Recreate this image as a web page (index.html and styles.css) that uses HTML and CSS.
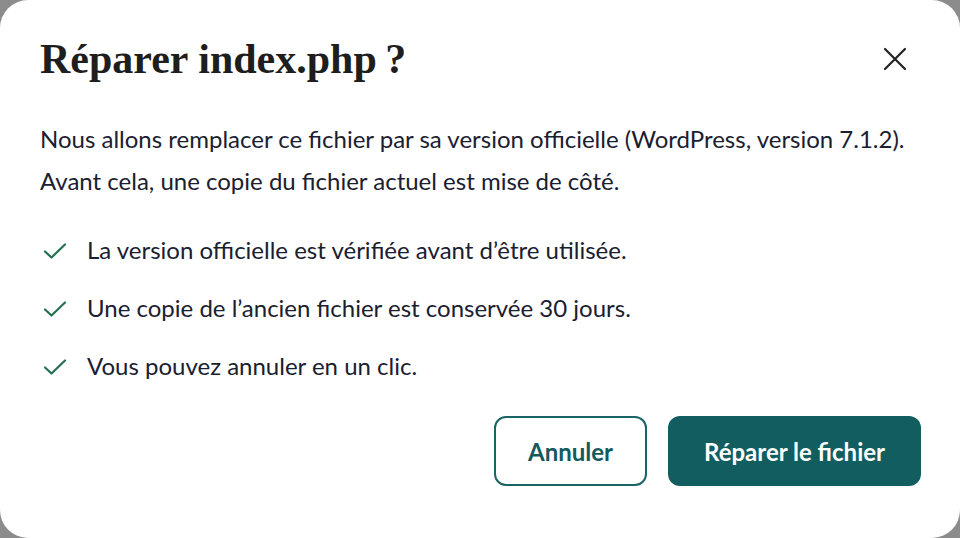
FILE: index.html
```html
<!DOCTYPE html>
<html lang="fr">
<head>
  <meta charset="UTF-8">
  <title>Réparer index.php ?</title>
  <link rel="stylesheet" href="styles.css">
</head>
<body>

  <!-- Boîte de dialogue de réparation -->
  <div class="dialog" role="dialog" aria-labelledby="dialogTitle">
    <div class="dialog-header">
      <h1 id="dialogTitle">Réparer index.php&#8201;?</h1>
      <button class="close-btn" aria-label="Fermer">
        <svg width="24" height="24" viewBox="0 0 24 24">
          <path d="M2 2 L22 22 M22 2 L2 22" stroke="#222" stroke-width="2.2" stroke-linecap="round" fill="none"/>
        </svg>
      </button>
    </div>

    <p class="intro">Nous allons remplacer ce fichier par sa version officielle (WordPress, version 7.1.2). Avant cela, une copie du fichier actuel est mise de côté.</p>

    <ul class="checks">
      <li>
        <svg class="check" width="24" height="18" viewBox="0 0 24 18"><path d="M2 9.5 L8.5 15.5 L22 2.5" stroke="#23714f" stroke-width="2.2" fill="none" stroke-linecap="round" stroke-linejoin="round"/></svg>
        La version officielle est vérifiée avant d’être utilisée.
      </li>
      <li>
        <svg class="check" width="24" height="18" viewBox="0 0 24 18"><path d="M2 9.5 L8.5 15.5 L22 2.5" stroke="#23714f" stroke-width="2.2" fill="none" stroke-linecap="round" stroke-linejoin="round"/></svg>
        Une copie de l’ancien fichier est conservée 30 jours.
      </li>
      <li>
        <svg class="check" width="24" height="18" viewBox="0 0 24 18"><path d="M2 9.5 L8.5 15.5 L22 2.5" stroke="#23714f" stroke-width="2.2" fill="none" stroke-linecap="round" stroke-linejoin="round"/></svg>
        Vous pouvez annuler en un clic.
      </li>
    </ul>

    <div class="actions">
      <button class="btn btn-secondary">Annuler</button>
      <button class="btn btn-primary">Réparer le fichier</button>
    </div>
  </div>

</body>
</html>
```

FILE: styles.css
```css
body {
  margin: 0;
  background: #8c8c8c;
  font-family: 'Lato', sans-serif;
  height: 538px;
  overflow: hidden;
}

.dialog {
  box-sizing: border-box;
  width: 960px;
  height: 538px;
  background: #fff;
  border-radius: 28px;
  padding: 36px 39px 0 40px;
  color: #1a2030;
}

.dialog-header {
  display: flex;
  justify-content: space-between;
  align-items: center;
}

.dialog-header h1 {
  margin: 0;
  font-family: 'Liberation Serif', serif;
  font-size: 42px;
  font-weight: bold;
  color: #1e1e1e;
  line-height: 46px;
}

.close-btn {
  background: none;
  border: none;
  padding: 0;
  margin-right: 14px;
  cursor: pointer;
  display: flex;
}

.intro {
  margin: 36px 0 0;
  font-size: 24px;
  line-height: 42px;
}

.checks {
  list-style: none;
  margin: 18px 0 0;
  padding: 0;
}

.checks li {
  display: flex;
  align-items: center;
  gap: 20px;
  height: 58px;
  font-size: 24px;
  padding-left: 3px;
}

.check {
  flex: none;
  margin-top: 4px;
}

.actions {
  display: flex;
  justify-content: flex-end;
  gap: 21px;
  margin-top: 22px;
}

.btn {
  height: 70px;
  border-radius: 12px;
  font-family: 'Lato', sans-serif;
  font-size: 24px;
  font-weight: bold;
  cursor: pointer;
  padding: 0 32px;
}

.btn-secondary {
  background: #fff;
  color: #145a5c;
  border: 2px solid #1b6466;
}

.btn-primary {
  background: #115d60;
  color: #fff;
  border: none;
  padding: 0 36px;
}
```
